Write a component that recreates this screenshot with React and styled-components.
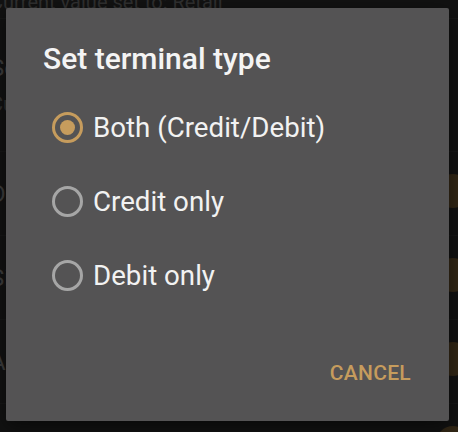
import React, { useState } from 'react';
import styled, { createGlobalStyle } from 'styled-components';

const GlobalStyle = createGlobalStyle`
  html, body {
    margin: 0;
    padding: 0;
    background: #1c1c1c;
  }
  body {
    font-family: Roboto, "Noto Sans", sans-serif;
  }
`;

const Screen = styled.div`
  position: relative;
  width: 458px;
  height: 432px;
  overflow: hidden;
  background: #1c1c1c;
`;

const PrefList = styled.div`
  display: flex;
  flex-direction: column;
  margin-left: -10px;
  margin-top: -14px;
`;

const PrefRow = styled.div`
  display: flex;
  align-items: center;
  justify-content: space-between;
  height: ${(p) => p.h}px;
  border-bottom: 1px solid #242424;
`;

const PrefText = styled.div`
  display: flex;
  flex-direction: column;
  gap: 10px;
`;

const PrefTitle = styled.div`
  font-size: 24px;
  color: #5e5e5e;
`;

const PrefSummary = styled.div`
  font-size: 20px;
  color: #4a4a4a;
`;

const Thumb = styled.div`
  width: 34px;
  height: 34px;
  border-radius: 50%;
  background: #4d3c22;
  margin-right: -12px;
  margin-top: -6px;
`;

const Scrim = styled.div`
  position: absolute;
  inset: 0;
  background: rgba(0, 0, 0, 0.35);
  display: flex;
  padding: 8px 9px 11px 6px;
  box-sizing: border-box;
`;

const Dialog = styled.div`
  flex: 1;
  background: #545354;
  border-radius: 2px;
  box-shadow: 0 6px 20px rgba(0, 0, 0, 0.5);
  display: flex;
  flex-direction: column;
  padding: 32px 0 0 0;
  box-sizing: border-box;
`;

const Title = styled.h2`
  margin: 0 0 12px 37px;
  font-size: 30px;
  font-weight: 500;
  line-height: 38px;
  color: #f4f4f4;
`;

const Options = styled.div`
  display: flex;
  flex-direction: column;
`;

const Option = styled.label`
  display: flex;
  align-items: center;
  height: 74px;
  padding-left: 46px;
  gap: 10px;
  cursor: pointer;
`;

const Radio = styled.span`
  width: 31px;
  height: 31px;
  border-radius: 50%;
  box-sizing: border-box;
  border: 3px solid ${(p) => (p.checked ? '#c69c5d' : '#a6a6a6')};
  display: flex;
  align-items: center;
  justify-content: center;
  &::after {
    content: '';
    width: 15px;
    height: 15px;
    border-radius: 50%;
    background: #c69c5d;
    display: ${(p) => (p.checked ? 'block' : 'none')};
  }
`;

const OptionLabel = styled.span`
  font-size: 27.7px;
  color: #f2f2f2;
`;

const Actions = styled.div`
  margin-top: auto;
  display: flex;
  justify-content: flex-end;
  padding: 0 30px 28px 0;
`;

const TextButton = styled.button`
  background: none;
  border: none;
  font-family: inherit;
  font-size: 21px;
  font-weight: 500;
  color: #c69c5d;
  padding: 8px 8px;
  letter-spacing: 0.3px;
`;

const options = ['Both (Credit/Debit)', 'Credit only', 'Debit only'];

export default function App() {
  const [value, setValue] = useState(0);
  return (
    <>
      <GlobalStyle />
      <Screen>
        <PrefList>
          <PrefRow h={32}>
            <PrefSummary>Current value set to: Retail</PrefSummary>
          </PrefRow>
          <PrefRow h={132}>
            <PrefText>
              <PrefTitle>Set terminal type</PrefTitle>
              <PrefSummary>Current value set to: Both</PrefSummary>
            </PrefText>
          </PrefRow>
          <PrefRow h={83}>
            <PrefTitle>Daily batch close</PrefTitle>
            <Thumb />
          </PrefRow>
          <PrefRow h={83}>
            <PrefTitle>Signature required</PrefTitle>
            <Thumb />
          </PrefRow>
          <PrefRow h={83}>
            <PrefTitle>Ask for tip</PrefTitle>
            <Thumb />
          </PrefRow>
          <PrefRow h={83}>
            <PrefTitle>Print receipt</PrefTitle>
            <Thumb />
          </PrefRow>
        </PrefList>
        <Scrim>
          <Dialog>
            <Title>Set terminal type</Title>
            <Options>
              {options.map((o, i) => (
                <Option key={o} onClick={() => setValue(i)}>
                  <Radio checked={value === i} />
                  <OptionLabel>{o}</OptionLabel>
                </Option>
              ))}
            </Options>
            <Actions>
              <TextButton>CANCEL</TextButton>
            </Actions>
          </Dialog>
        </Scrim>
      </Screen>
    </>
  );
}
